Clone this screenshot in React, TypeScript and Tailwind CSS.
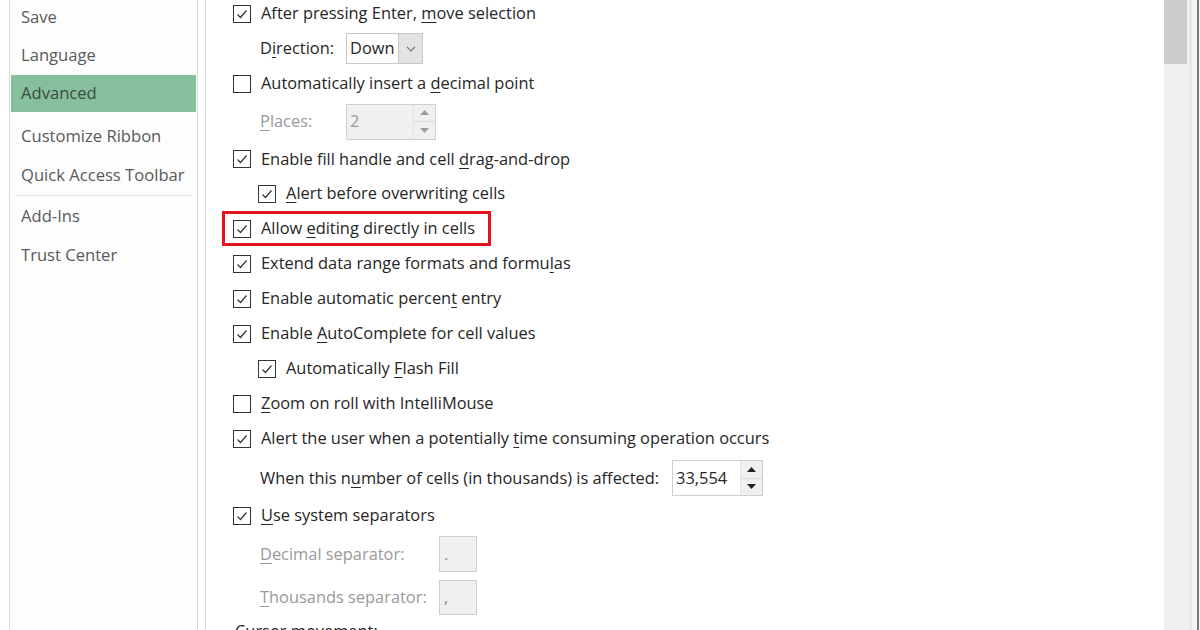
import React from "react";

const font = { fontFamily: "'Open Sans', 'Noto Sans', sans-serif" };

const U: React.FC<{ children: React.ReactNode }> = ({ children }) => (
  <span className="underline underline-offset-[3px] decoration-1">{children}</span>
);

const Box: React.FC<{ checked?: boolean }> = ({ checked }) => (
  <span className="w-[18px] h-[18px] border border-[#333] bg-white flex items-center justify-center shrink-0">
    {checked && (
      <svg width="14" height="14" viewBox="0 0 14 14">
        <polyline points="2.5,7.5 5.5,10.5 11.5,3.5" fill="none" stroke="#333" strokeWidth="1.2" />
      </svg>
    )}
  </span>
);

const Check: React.FC<{
  checked?: boolean;
  indent?: boolean;
  h: string;
  children: React.ReactNode;
}> = ({ checked, indent, h, children }) => (
  <div className={`flex items-center ${h} ${indent ? "pl-[25px]" : ""}`}>
    <Box checked={checked} />
    <span className="ml-[10px] text-[#262626]">{children}</span>
  </div>
);

const Spin: React.FC<{ disabled?: boolean }> = ({ disabled }) => (
  <div className="flex flex-col w-[22px] h-full border-l border-[#e3e3e3]">
    <div className="flex-1 flex items-center justify-center bg-[#f0f0f0]">
      <svg width="9" height="5" viewBox="0 0 9 5">
        <polygon points="0,5 4.5,0 9,5" fill={disabled ? "#9a9a9a" : "#222"} />
      </svg>
    </div>
    <div className="h-px bg-[#dcdcdc]" />
    <div className="flex-1 flex items-center justify-center bg-[#f0f0f0]">
      <svg width="9" height="5" viewBox="0 0 9 5">
        <polygon points="0,0 9,0 4.5,5" fill={disabled ? "#9a9a9a" : "#222"} />
      </svg>
    </div>
  </div>
);

const navItems = [
  { label: "Save", h: "h-[37px]" },
  { label: "Language", h: "h-[39px]" },
  { label: "Advanced", h: "h-[37px]", active: true },
  { label: "Customize Ribbon", h: "h-[48px]" },
  { label: "Quick Access Toolbar", h: "h-[30px]" },
];

const App: React.FC = () => {
  return (
    <div className="w-[1200px] h-[630px] overflow-hidden flex bg-white text-[16.4px]" style={font}>
      {/* SIDEBAR */}
      <div className="w-[9px] shrink-0" />
      <div className="w-[189px] shrink-0 border-x border-[#dadada] bg-[#fdfdfd] px-px text-[#595959] text-[16.6px]">
        <div className="mt-[-1px]">
          {navItems.map((it) => (
            <div
              key={it.label}
              className={`flex items-center pl-[10px] ${it.h} ${it.active ? "bg-[#86bf9c] text-[#3b4a40]" : ""}`}
            >
              {it.label}
            </div>
          ))}
        </div>
        <div className="mx-[4px] mt-[5px] h-px bg-[#e1e1e1]" />
        <div className="flex items-center pl-[10px] h-[41px]">Add-Ins</div>
        <div className="flex items-center pl-[10px] h-[36px]">Trust Center</div>
      </div>
      <div className="w-[7px] shrink-0" />

      {/* CONTENT */}
      <div className="flex-1 border-l border-[#dadada] pl-[27px] text-[#262626]">
        <div className="mt-[-4px]">
          <Check checked h="h-[35px]">
            After pressing Enter, <U>m</U>ove selection
          </Check>
          <div className="flex items-center h-[35px] pl-[27px]">
            <span>
              D<U>i</U>rection:
            </span>
            <div className="ml-[12px] flex h-[31px] w-[77px] border border-[#c8c8c8]">
              <span className="flex-1 flex items-center pl-[3px]">Down</span>
              <span className="w-[24px] bg-[#e3e3e3] border-l border-[#c8c8c8] flex items-center justify-center">
                <svg width="10" height="6" viewBox="0 0 10 6">
                  <polyline points="1,1 5,5 9,1" fill="none" stroke="#777" strokeWidth="1.1" />
                </svg>
              </span>
            </div>
          </div>
          <Check h="h-[35px]">
            Automatically insert a <U>d</U>ecimal point
          </Check>
          <div className="flex items-center h-[41px] pl-[27px] text-[#9a9a9a]">
            <span className="w-[86px]">
              <U>P</U>laces:
            </span>
            <div className="flex h-[36px] w-[90px] border border-[#cfcfcf] bg-[#f0f0f0]">
              <span className="flex-1 flex items-center pl-[3px] text-[#9a9a9a]">2</span>
              <Spin disabled />
            </div>
          </div>
          <Check checked h="h-[34px]">
            Enable fill handle and cell <U>d</U>rag-and-drop
          </Check>
          <Check checked indent h="h-[35px]">
            <U>A</U>lert before overwriting cells
          </Check>
          <div className="ml-[-11px] w-[269px] h-[35px] border-[3px] border-[#e3141b] flex items-center pl-[8px]">
            <Box checked />
            <span className="ml-[10px]">
              Allow <U>e</U>diting directly in cells
            </span>
          </div>
          <Check checked h="h-[35px]">
            Extend data range formats and formu<U>l</U>as
          </Check>
          <Check checked h="h-[35px]">
            Enable automatic percen<U>t</U> entry
          </Check>
          <Check checked h="h-[35px]">
            Enable <U>A</U>utoComplete for cell values
          </Check>
          <Check checked indent h="h-[35px]">
            Automatically <U>F</U>lash Fill
          </Check>
          <Check h="h-[35px]">
            <U>Z</U>oom on roll with IntelliMouse
          </Check>
          <Check checked h="h-[35px]">
            Alert the user when a potentially <U>t</U>ime consuming operation occurs
          </Check>
          <div className="flex items-center h-[44px] pl-[27px]">
            <span>
              When this n<U>u</U>mber of cells (in thousands) is affected:
            </span>
            <div className="ml-[13px] flex h-[36px] w-[91px] border border-[#cfcfcf] bg-white">
              <span className="flex-1 flex items-center pl-[3px]">33,554</span>
              <Spin />
            </div>
          </div>
          <Check checked h="h-[31px]">
            <U>U</U>se system separators
          </Check>
          <div className="flex items-center h-[46px] pl-[27px] text-[#9a9a9a]">
            <span className="w-[179px]">
              <U>D</U>ecimal separator:
            </span>
            <div className="h-[36px] w-[38px] border border-[#cfcfcf] bg-[#f0f0f0] flex items-center pl-[4px] text-[#8a8a8a]">
              .
            </div>
          </div>
          <div className="flex items-center h-[41px] pl-[27px] text-[#9a9a9a]">
            <span className="w-[179px]">
              <U>T</U>housands separator:
            </span>
            <div className="h-[35px] w-[38px] border border-[#cfcfcf] bg-[#f0f0f0] flex items-center pl-[4px] text-[#8a8a8a]">
              ,
            </div>
          </div>
          <div className="flex items-center h-[26px] pl-[2px]">Cursor movement:</div>
        </div>
      </div>

      {/* SCROLLBAR */}
      <div className="w-[25px] shrink-0 bg-[#f0f0f0] flex flex-col">
        <div className="h-[64px] w-[23px] bg-[#cdcdcd]" />
      </div>
      <div className="w-[11px] shrink-0 flex">
        <div className="w-[3px] bg-[#e8e8e8]" />
        <div className="flex-1 bg-[#f3f3f3]" />
        <div className="w-[2px] bg-[#7a7a7a]" />
        <div className="w-px bg-[#f3f3f3]" />
      </div>
    </div>
  );
};

export default App;
